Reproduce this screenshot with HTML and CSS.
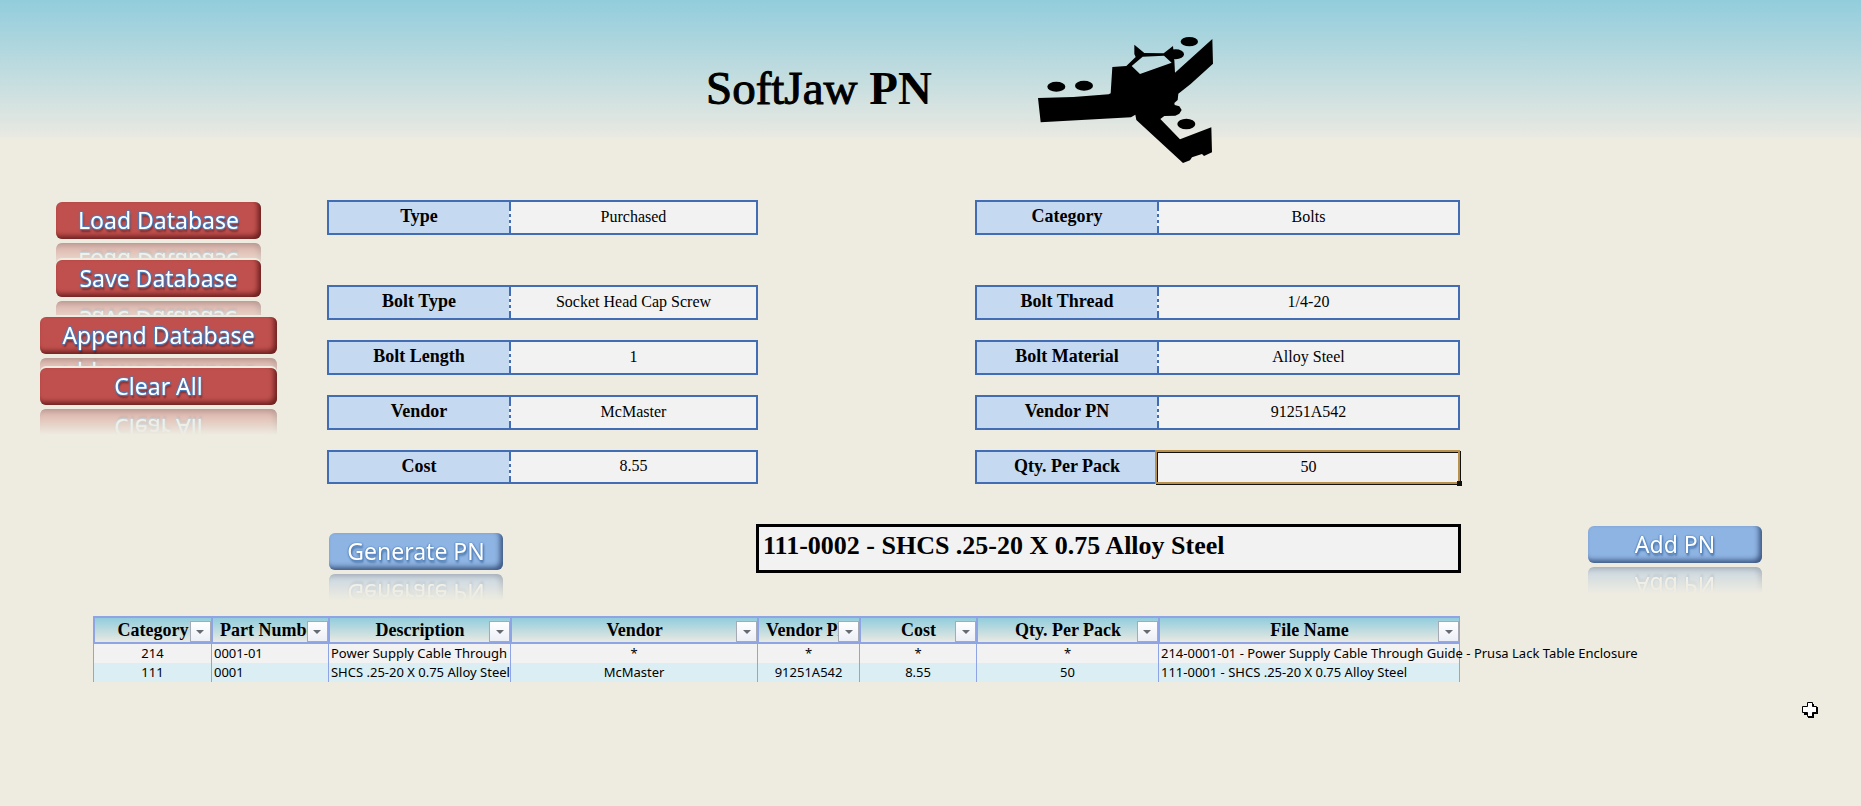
FILE: index.html
```html
<!DOCTYPE html>
<html lang="en">
<head>
<meta charset="utf-8">
<title>SoftJaw PN</title>
<link rel="stylesheet" href="styles.css">
</head>
<body>
<header class="banner">
  <h1 class="title">SoftJaw <b>PN</b></h1>
  <svg class="logo" viewBox="0 0 570 420" role="img" aria-label="Soft jaw chuck">
    <ellipse cx="79" cy="170" rx="27" ry="15"/>
    <ellipse cx="162" cy="167" rx="27" ry="15"/>
    <ellipse cx="478" cy="35" rx="26" ry="14"/>
    <ellipse cx="437" cy="73" rx="25" ry="15"/>
    <ellipse cx="469" cy="282" rx="27" ry="16"/>
    <path fill-rule="evenodd" d="M24 204 L130 201 L236 193 L242 190 L247 111 L289 108 L317 81 L313 72 L313 44 L343 69 L401 70 L429 48 L431 70 L433 90 L435 128 L547 27 L549 101 L482 162 L445 191 L443 210 L433 219 L434 225 L448 229 L455 240 L448 251 L436 257 L403 258 L391 267 L450 328 L544 292 L546 367 L522 378 L516 372 L486 382 L480 391 L459 399 L319 270 L316 254 L303 262 L32 277 Z M305 108 L330 132 L425 98 L402 77 L338 80 Z"/>
  </svg>
</header>

<main>
  <form class="entry">
    <div class="commands">
      <button type="button" class="btn red load">Load Database</button>
      <button type="button" class="btn red save">Save Database</button>
      <button type="button" class="btn red append">Append Database</button>
      <button type="button" class="btn red">Clear All</button>
    </div>
    <div class="fields part">
      <div class="field first"><label for="type">Type</label><input id="type" value="Purchased"></div>
      <div class="field"><label for="bolt-type">Bolt Type</label><input id="bolt-type" value="Socket Head Cap Screw"></div>
      <div class="field"><label for="bolt-length">Bolt Length</label><input id="bolt-length" value="1"></div>
      <div class="field"><label for="vendor">Vendor</label><input id="vendor" value="McMaster"></div>
      <div class="field"><label for="cost">Cost</label><input id="cost" value="8.55"></div>
    </div>
    <div class="fields spec">
      <div class="field first"><label for="category">Category</label><input id="category" value="Bolts"></div>
      <div class="field"><label for="thread">Bolt Thread</label><input id="thread" value="1/4-20"></div>
      <div class="field"><label for="material">Bolt Material</label><input id="material" value="Alloy Steel"></div>
      <div class="field"><label for="vendor-pn">Vendor PN</label><input id="vendor-pn" value="91251A542"></div>
      <div class="field active"><label for="qty">Qty. Per Pack</label><input id="qty" value="50"></div>
    </div>
  </form>

  <div class="actions">
    <button type="button" class="btn blue generate">Generate PN</button>
    <input class="result" aria-label="Part number" readonly value="111-0002 - SHCS .25-20 X 0.75 Alloy Steel">
    <button type="button" class="btn blue add">Add PN</button>
  </div>

  <div class="records">
    <table>
      <colgroup>
        <col class="c-category"><col class="c-number"><col class="c-description"><col class="c-vendor">
        <col class="c-vendor-pn"><col class="c-cost"><col class="c-qty"><col class="c-file">
      </colgroup>
      <thead>
        <tr>
          <th><div class="head"><span>Category</span><button type="button" class="filter" aria-label="Filter Category"></button></div></th>
          <th><div class="head tight"><span>Part Number</span><button type="button" class="filter" aria-label="Filter Part Number"></button></div></th>
          <th><div class="head"><span>Description</span><button type="button" class="filter" aria-label="Filter Description"></button></div></th>
          <th><div class="head"><span>Vendor</span><button type="button" class="filter" aria-label="Filter Vendor"></button></div></th>
          <th><div class="head tight"><span>Vendor PN</span><button type="button" class="filter" aria-label="Filter Vendor PN"></button></div></th>
          <th><div class="head"><span>Cost</span><button type="button" class="filter" aria-label="Filter Cost"></button></div></th>
          <th><div class="head"><span>Qty. Per Pack</span><button type="button" class="filter" aria-label="Filter Qty. Per Pack"></button></div></th>
          <th><div class="head"><span>File Name</span><button type="button" class="filter" aria-label="Filter File Name"></button></div></th>
        </tr>
      </thead>
      <tbody>
        <tr>
          <td>214</td><td class="text">0001-01</td><td class="text">Power Supply Cable Through</td><td>*</td>
          <td>*</td><td>*</td><td>*</td><td class="text spill">214-0001-01 - Power Supply Cable Through Guide - Prusa Lack Table Enclosure</td>
        </tr>
        <tr>
          <td>111</td><td class="text">0001</td><td class="text">SHCS .25-20 X 0.75 Alloy Steel</td><td>McMaster</td>
          <td>91251A542</td><td>8.55</td><td>50</td><td class="text spill">111-0001 - SHCS .25-20 X 0.75 Alloy Steel</td>
        </tr>
      </tbody>
    </table>
  </div>
</main>

<svg class="pointer" viewBox="0 0 16 16" aria-hidden="true">
  <path d="M6 2h6v3h4v7h-4v4H6v-3H2V6h4z"/>
  <path class="pointer-face" d="M5.500 .5h5v4h4v6h-4v4h-5v-4h-5v-6h5z"/>
</svg>
</body>
</html>
```
FILE: styles.css
```css
* {
  box-sizing: border-box;
}

body {
  margin: 0;
  min-height: 100vh;
  background: #eeece1;
  color: #000;
  font-family: "Liberation Serif", serif;
  overflow-x: hidden;
}

/* Banner */
.banner {
  display: grid;
  grid-template-columns: 706fr 324fr 831fr;
  height: 170px;
  padding-top: 30px;
  background: linear-gradient(#92cddc, #e9e9e2 137px, #eeece1 138px);
}

.title {
  grid-column: 2;
  margin: 0;
  padding-top: 32px;
  font-size: 47px;
  line-height: 52px;
  font-weight: 400;
  white-space: nowrap;
  -webkit-text-stroke: 1px #000;
}

.title b {
  -webkit-text-stroke: 0;
}

.logo {
  width: 190px;
  height: 140px;
}

/* Entry form */
.entry {
  display: grid;
  grid-template-columns: 40fr 237fr 50fr 431fr 217fr 485fr 401fr;
  padding-top: 30px;
}

.commands {
  grid-column: 2;
  display: flex;
  flex-direction: column;
  padding-top: 2px;
}

.btn {
  display: block;
  height: 37px;
  padding: 0 0 2px;
  border: 0;
  border-radius: 6px;
  color: #fff;
  font-family: "Noto Sans", sans-serif;
  font-size: 23px;
  line-height: 34px;
  white-space: nowrap;
  -webkit-box-reflect: below 4px linear-gradient(transparent 30%, rgba(0, 0, 0, 0.4));
}

.red {
  background: #c0504d;
  box-shadow: inset -3px -3px 5px rgba(50, 0, 0, 0.6), 0 -2px 0 #eeece1;
  text-shadow: 0 0 2px #3a7ac8, 1px 0 1px #4f81bd, -1px 0 1px #4f81bd, 0 1px 1px #4f81bd, 0 -1px 1px #4f81bd, 1px 3px 2px rgba(60, 0, 0, 0.5);
}

.blue {
  background: #8eb4e3;
  box-shadow: inset -3px -3px 5px rgba(20, 40, 80, 0.65);
  text-shadow: 0 0 2px #4f81bd, 1px 1px 2px #4f81bd, -1px 0 1px #7399c9, 1px 3px 2px rgba(40, 80, 130, 0.5);
}

.load,
.save {
  margin: 0 16px;
}

.load {
  margin-bottom: 21px;
}

.save {
  margin-bottom: 20px;
}

.append {
  margin-bottom: 14px;
}

.fields {
  display: flex;
  flex-direction: column;
  gap: 20px;
}

.part {
  grid-column: 4;
}

.spec {
  grid-column: 6;
}

.field {
  position: relative;
  display: grid;
  height: 35px;
  border: 2px solid #426db5;
  background: #f2f2f2;
}

.part .field {
  grid-template-columns: 180fr 247fr;
}

.spec .field {
  grid-template-columns: 180fr 301fr;
}

.first {
  margin-bottom: 30px;
}

.field:last-child {
  height: 34px;
}

.field label {
  background: #c5d9f1;
  font-size: 18px;
  font-weight: 700;
  line-height: 29px;
  text-align: center;
}

.field input {
  min-width: 0;
  padding: 0 0 2px 2px;
  border: 0;
  background: repeating-linear-gradient(#426db5 0 9px, transparent 9px 12px, #426db5 12px 15px, transparent 15px 18px, #426db5 18px 21px, transparent 21px 24px) left / 2px 100% no-repeat;
  font-family: inherit;
  font-size: 16px;
  text-align: center;
}

.active input {
  margin: -2px;
  padding: 0 0 0 2px;
  border: 2px solid #b8924c;
  background: #f2f2f2;
  box-shadow: inset 1px 1px 0 #111, 1px 1px 0 #111;
}

.active::after {
  content: "";
  position: absolute;
  right: -4px;
  bottom: -4px;
  width: 5px;
  height: 5px;
  background: #111;
}

/* Part number row */
.actions {
  display: grid;
  grid-template-columns: 329fr 174fr 253fr 705fr 127fr 174fr 99fr;
  align-items: start;
  padding-top: 40px;
}

.generate {
  grid-column: 2;
  margin-top: 9px;
}

.result {
  grid-column: 4;
  min-width: 0;
  height: 49px;
  padding: 0 4px 6px;
  border: 3px solid #000;
  background: #f2f2f2;
  font-family: inherit;
  font-size: 26px;
  font-weight: 700;
}

.add {
  grid-column: 6;
  margin-top: 2px;
}

/* Records table */
.records {
  display: grid;
  grid-template-columns: 93fr 1367fr 401fr;
  padding-top: 43px;
}

table {
  grid-column: 2;
  width: 100%;
  table-layout: fixed;
  border-collapse: separate;
  border-spacing: 0;
}

.c-category { width: 8.63%; }
.c-number { width: 8.56%; }
.c-description { width: 13.32%; }
.c-vendor { width: 18.07%; }
.c-vendor-pn { width: 7.46%; }
.c-cost { width: 8.56%; }
.c-qty { width: 13.31%; }
.c-file { width: 22.09%; }

th {
  height: 28px;
  padding: 0;
  border: solid #8ea4e4;
  border-width: 2px 0 2px 2px;
  background: linear-gradient(#92cddc, #e9e9e2);
}

th:last-child {
  border-right-width: 1px;
}

.head {
  position: relative;
  height: 24px;
  overflow: hidden;
  font-size: 18px;
  line-height: 24px;
  white-space: nowrap;
}

.tight {
  padding-left: 7px;
  text-align: left;
}

.filter {
  position: absolute;
  right: 0;
  bottom: 0;
  width: 21px;
  height: 21px;
  padding: 0;
  border: 1px solid #a6aab4;
  background: linear-gradient(#fff, #eceff6);
}

.filter::before {
  content: "";
  display: block;
  width: 0;
  margin: 0 auto;
  border: 4px solid transparent;
  border-top-color: #666a72;
  border-bottom: 0;
}

td {
  height: 19px;
  padding: 0;
  border-left: 1px solid #8ea4e4;
  background: #f2f2f2;
  font-family: "Noto Sans", sans-serif;
  font-size: 13px;
  line-height: 19px;
  text-align: center;
  white-space: nowrap;
  overflow: hidden;
}

tr:last-child td {
  background: #daeef3;
}

td:last-child {
  border-right: 1px solid #8ea4e4;
}

.text {
  padding-left: 2px;
  text-align: left;
}

.spill {
  overflow: visible;
}

.pointer {
  display: block;
  width: 16px;
  height: 16px;
  margin: 20px 43px 0 auto;
}

.pointer-face {
  fill: #fff;
  stroke: #000;
}
```
